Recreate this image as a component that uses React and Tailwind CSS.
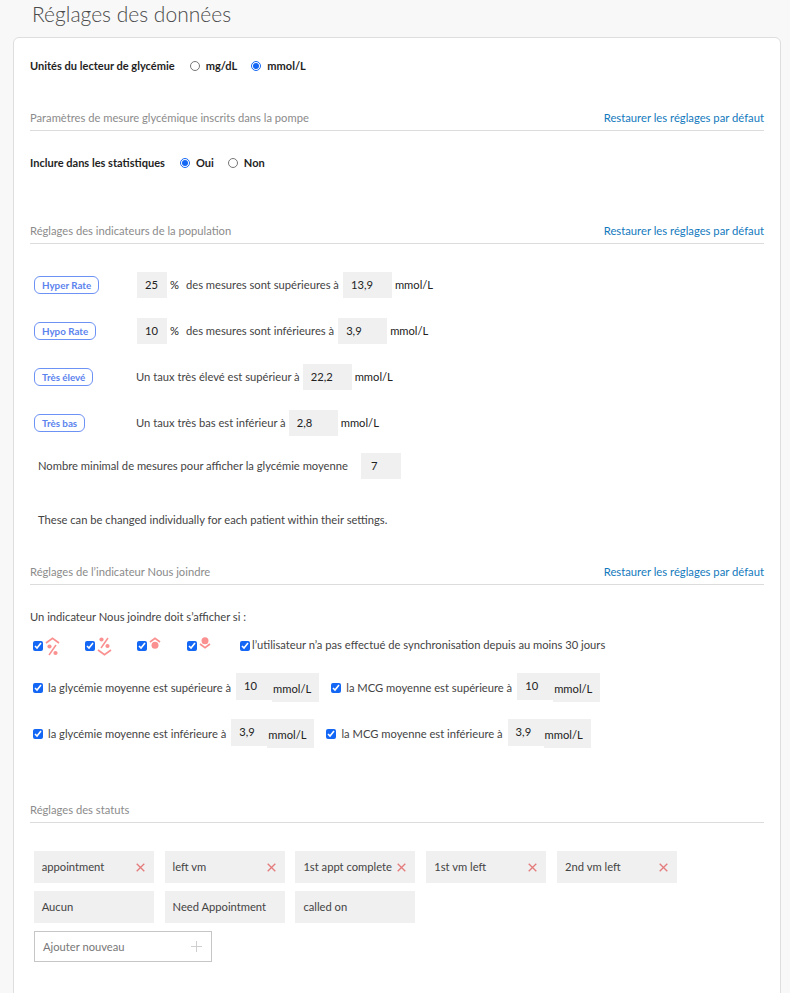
const font = { fontFamily: '"Lato", "Noto Sans", sans-serif' };

const SectionHeader = ({ title, reset }) => (
  <div className="flex h-[25px] items-start justify-between border-b border-[#dcdcdc] pt-[3px] text-[11.2px] leading-[18px]">
    <span className="text-[#8b8b8b]">{title}</span>
    {reset && <a className="text-[11.25px] text-[#1279bd]">Restaurer les réglages par défaut</a>}
  </div>
);

const Radio = ({ label, checked }) => (
  <label className="flex items-center gap-[6px] font-bold text-[#1f1f1f]">
    <input type="radio" defaultChecked={checked} className="m-0 h-[10px] w-[10px] accent-[#1467f5]" />
    {label}
  </label>
);

const Badge = ({ children }) => (
  <span className="inline-flex h-[18px] items-center rounded-[6px] border border-[#6d92f5] px-[7px] text-[9.8px] font-bold text-[#5b83ee]">
    {children}
  </span>
);

const Value = ({ children, w = 'w-[49px]', pl = 'pl-[8px]', className = '' }) => (
  <span className={`flex h-[26px] items-center bg-[#f0f0f0] text-[#222] ${w} ${pl} ${className}`}>{children}</span>
);

const Check = () => (
  <input type="checkbox" defaultChecked className="m-0 h-[10px] w-[10px] shrink-0 accent-[#1467f5]" />
);

const RateRow = ({ badge, children, className }) => (
  <div className={`flex h-[26px] items-center ${className}`}>
    <div className="flex w-[102px] shrink-0 items-center">
      <Badge>{badge}</Badge>
    </div>
    {children}
  </div>
);

const IconHyperRate = () => (
  <svg width="15" height="19" viewBox="0 0 15 19" fill="none" stroke="#fa9090" strokeWidth="1.7">
    <path d="M1 6 L7.5 1.2 L14 6" />
    <circle cx="4.5" cy="9.5" r="2.1" fill="#fa9090" stroke="none" />
    <circle cx="10.5" cy="16" r="2.1" fill="#fa9090" stroke="none" />
    <path d="M4 18 L11 8" strokeWidth="1.5" />
  </svg>
);

const IconHypoRate = () => (
  <svg width="15" height="19" viewBox="0 0 15 19" fill="none" stroke="#fa9090" strokeWidth="1.7">
    <circle cx="4.5" cy="2.5" r="2.1" fill="#fa9090" stroke="none" />
    <circle cx="10.5" cy="9" r="2.1" fill="#fa9090" stroke="none" />
    <path d="M4 11 L11 1" strokeWidth="1.5" />
    <path d="M1 13 L7.5 17.8 L14 13" />
  </svg>
);

const IconHigh = () => (
  <svg width="12" height="12" viewBox="0 0 12 12" fill="none" stroke="#fa9090" strokeWidth="1.7">
    <path d="M1 5 L6 1.2 L11 5" />
    <circle cx="6" cy="8.2" r="3.5" fill="#fa9090" stroke="none" />
  </svg>
);

const IconLow = () => (
  <svg width="12" height="12" viewBox="0 0 12 12" fill="none" stroke="#fa9090" strokeWidth="1.7">
    <circle cx="6" cy="3.8" r="3.5" fill="#fa9090" stroke="none" />
    <path d="M1 7 L6 10.8 L11 7" />
  </svg>
);

const Chip = ({ label, removable }) => (
  <div className="flex h-[32px] w-[120px] items-center justify-between bg-[#f0f0f0] pl-[8px] pr-[9px] text-[#444]">
    <span>{label}</span>
    {removable && (
      <svg width="9" height="9" viewBox="0 0 9 9" stroke="#e47a7a" strokeWidth="1.3">
        <path d="M0.7 0.7 L8.3 8.3 M8.3 0.7 L0.7 8.3" />
      </svg>
    )}
  </div>
);

const Unit = ({ value }) => (
  <span className="flex items-start">
    <span className="flex h-[27px] w-[36px] items-center bg-[#f0f0f0] pb-[2px] pl-[8px] text-[#222]">{value}</span>
    <span className="flex h-[29px] items-center bg-[#f0f0f0] pl-[1px] pr-[8px] pt-[2px] text-[#222]">mmol/L</span>
  </span>
);

const Threshold = ({ label, value, gap }) => (
  <div className={`flex h-[29px] items-center ${gap}`}>
    <Check />
    <span className="ml-[5px] mr-[5px] text-[#444]">{label}</span>
    <Unit value={value} />
  </div>
);

const statuses = [
  ['appointment', true],
  ['left vm', true],
  ['1st appt complete', true],
  ['1st vm left', true],
  ['2nd vm left', true],
  ['Aucun', false],
  ['Need Appointment', false],
  ['called on', false],
];

export default function App() {
  return (
    <div style={font} className="h-[993px] overflow-hidden bg-[#f8f8f8] text-[11.2px] leading-[16px] text-[#444]">
      <h1 className="h-[37px] pl-[32px] pt-[1px] text-[21px] font-light leading-[26px] text-[#4a4a4a]">
        Réglages des données
      </h1>
      <div className="ml-[13px] mr-[9px] h-[1000px] rounded-[6px] border border-[#dedede] bg-white px-[16px]">
        <div className="mt-[19px] flex h-[18px] items-center text-[11.05px] font-bold text-[#1f1f1f]">
          <span className="mr-[15px]">Unités du lecteur de glycémie</span>
          <div className="flex gap-[14px]">
            <Radio label="mg/dL" />
            <Radio label="mmol/L" checked />
          </div>
        </div>

        <div className="mt-[31px]">
          <SectionHeader title="Paramètres de mesure glycémique inscrits dans la pompe" reset />
        </div>

        <div className="mt-[23px] flex h-[18px] items-center text-[11.05px] font-bold text-[#1f1f1f]">
          <span className="mr-[15px]">Inclure dans les statistiques</span>
          <div className="flex gap-[14px]">
            <Radio label="Oui" checked />
            <Radio label="Non" />
          </div>
        </div>

        <div className="mt-[47px]">
          <SectionHeader title="Réglages des indicateurs de la population" reset />
        </div>

        <div className="pl-[4px]">
          <RateRow badge="Hyper Rate" className="mt-[28px]">
            <Value w="w-[30px]" className="ml-[1px]">25</Value>
            <span className="ml-[3px] mr-[5px] text-[#222]">%</span>
            <span className="ml-[2px] mr-[4px]">des mesures sont supérieures à</span>
            <Value>13,9</Value>
            <span className="ml-[3px] text-[#222]">mmol/L</span>
          </RateRow>
          <RateRow badge="Hypo Rate" className="mt-[20px]">
            <Value w="w-[30px]" className="ml-[1px]">10</Value>
            <span className="ml-[3px] mr-[5px] text-[#222]">%</span>
            <span className="ml-[2px] mr-[4px]">des mesures sont inférieures à</span>
            <Value>3,9</Value>
            <span className="ml-[3px] text-[#222]">mmol/L</span>
          </RateRow>
          <RateRow badge="Très élevé" className="mt-[20px]">
            <span className="mr-[3px]">Un taux très élevé est supérieur à</span>
            <Value>22,2</Value>
            <span className="ml-[3px] text-[#222]">mmol/L</span>
          </RateRow>
          <RateRow badge="Très bas" className="mt-[20px]">
            <span className="mr-[3px]">Un taux très bas est inférieur à</span>
            <Value>2,8</Value>
            <span className="ml-[3px] text-[#222]">mmol/L</span>
          </RateRow>
          <div className="mt-[17px] flex h-[26px] items-center pl-[4px]">
            <span className="mr-[13px]">Nombre minimal de mesures pour afficher la glycémie moyenne</span>
            <Value w="w-[40px]" pl="pl-[10px]">7</Value>
          </div>
          <p className="mt-[33px] pl-[4px]">These can be changed individually for each patient within their settings.</p>
        </div>

        <div className="mt-[32px]">
          <SectionHeader title="Réglages de l’indicateur Nous joindre" reset />
        </div>

        <p className="mt-[24px]">Un indicateur Nous joindre doit s’afficher si :</p>

        <div className="mt-[12px] flex h-[20px] items-start pl-[3px]">
          <div className="flex w-[52px] items-start gap-[2px]">
            <span className="mt-[2px]"><Check /></span>
            <IconHyperRate />
          </div>
          <div className="flex w-[52px] items-start gap-[2px]">
            <span className="mt-[2px]"><Check /></span>
            <IconHypoRate />
          </div>
          <div className="flex w-[50px] items-start gap-[2px]">
            <span className="mt-[2px]"><Check /></span>
            <IconHigh />
          </div>
          <div className="flex w-[53px] items-start gap-[2px]">
            <span className="mt-[2px]"><Check /></span>
            <IconLow />
          </div>
          <div className="flex items-start gap-[2px]">
            <span className="mt-[2px]"><Check /></span>
            <span>l’utilisateur n’a pas effectué de synchronisation depuis au moins 30 jours</span>
          </div>
        </div>

        <div className="mt-[16px] flex pl-[3px]">
          <Threshold label="la glycémie moyenne est supérieure à" value="10" gap="mr-[12px]" />
          <Threshold label="la MCG moyenne est supérieure à" value="10" />
        </div>
        <div className="mt-[17px] flex pl-[3px]">
          <Threshold label="la glycémie moyenne est inférieure à" value="3,9" gap="mr-[12px]" />
          <Threshold label="la MCG moyenne est inférieure à" value="3,9" />
        </div>

        <div className="mt-[50px]">
          <SectionHeader title="Réglages des statuts" />
        </div>

        <div className="mt-[28px] flex flex-wrap gap-x-[10.85px] gap-y-[8px] pl-[3.7px]">
          {statuses.map(([label, removable]) => (
            <Chip key={label} label={label} removable={removable} />
          ))}
        </div>

        <div className="ml-[4px] mt-[8px] flex h-[31px] w-[178px] items-center justify-between border border-[#c6c6c6] pl-[8px] pr-[9px] text-[#777]">
          <span>Ajouter nouveau</span>
          <svg width="11" height="11" viewBox="0 0 11 11" stroke="#cfcfcf" strokeWidth="1">
            <path d="M5.5 0 V11 M0 5.5 H11" />
          </svg>
        </div>
      </div>
    </div>
  );
}
